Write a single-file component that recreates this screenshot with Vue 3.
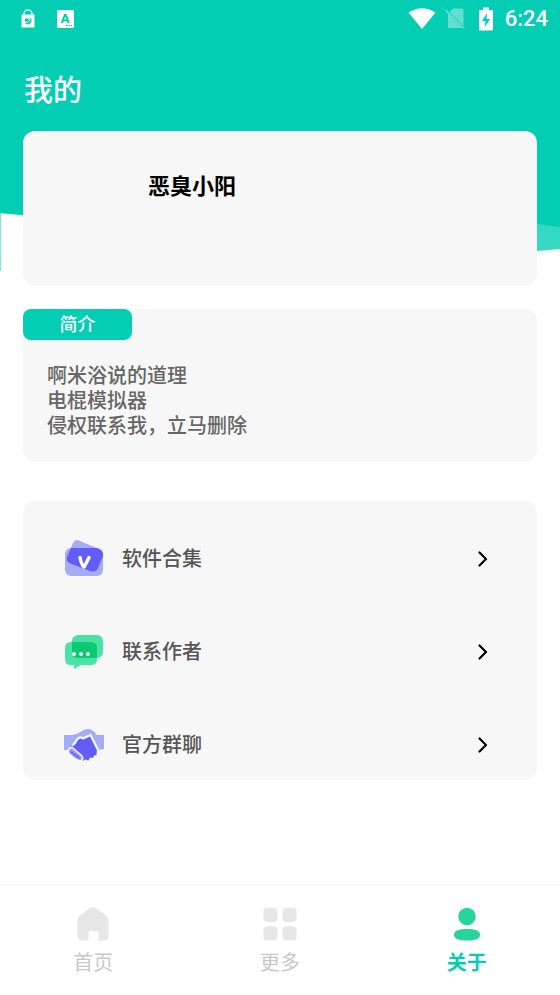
<script setup>
const notes = ['啊米浴说的道理', '电棍模拟器', '侵权联系我，立马删除'].join('\n')
const entries = [
  { id: 'apps', label: '软件合集' },
  { id: 'author', label: '联系作者' },
  { id: 'group', label: '官方群聊' },
]
const tabs = [
  { id: 'home', label: '首页' },
  { id: 'more', label: '更多' },
  { id: 'about', label: '关于', active: true },
]
</script>

<template>
  <div class="screen">
    <svg class="backdrop" viewBox="0 0 560 280" preserveAspectRatio="none" aria-hidden="true">
      <path fill="#35d8c1" d="M0 0H560V249Q548 250 537 251Q280 262 23 215L0 213Z" />
      <path fill="#03ceb4" d="M0 0H560V227L537 224L23 215L0 213Z" />
      <path fill="#7fe6d8" d="M0 213H1V271H0Z" />
    </svg>

    <header class="status">
      <div class="status-group left">
        <svg width="14" height="20" viewBox="0 0 14 20" aria-hidden="true">
          <path d="M3 6V5a4 4 0 0 1 8 0v1" fill="none" stroke="#fff" stroke-opacity=".8" stroke-width="1.6" />
          <path d="M0.5 5.500H13.500V18.500H0.500Z" fill="#fff" />
          <path d="M3.500 11a2 2 0 0 1 3-1.500l1 1q2-.5 2.500-2.500q1.500 4-1 6.500q-2.500 2-5 0l3-1q-3-.500-3.500-2.500Z" fill="#03ceb4" />
          <path d="M5.500 13q3 0 4.500-3.500" fill="none" stroke="#fff" stroke-width=".7" />
        </svg>
        <svg width="17" height="20" viewBox="0 0 17 20" aria-hidden="true">
          <rect y="1" width="17" height="18" rx="1.500" fill="#fff" />
          <path d="M7.200 5H9.400L12.800 14H10.600L10 12.200H6.600L6 14H3.800ZM8.300 7.500L7.200 10.600H9.400Z" fill="#03ceb4" fill-rule="evenodd" />
          <path d="M9 16.500h6" stroke="#03ceb4" stroke-width="1.200" stroke-dasharray="1.500 .8" />
        </svg>
      </div>
      <div class="status-group right">
        <svg width="28" height="22" viewBox="0 0 28 22" aria-hidden="true">
          <path d="M0.500 4.500Q14-4 27.500 4.500L14 21Z" fill="#fff" />
        </svg>
        <svg class="sim" width="20" height="22" viewBox="0 0 20 22" aria-hidden="true">
          <path d="M8 0.500H17.500a1 1 0 0 1 1 1V18L4.500 4ZM3 5.500L17.500 20H4a1 1 0 0 1-1-1Z" fill="#63dfcf" />
          <path d="M0.500 2L19 20.500" stroke="#63dfcf" stroke-width="1.700" />
        </svg>
        <svg width="14" height="24" viewBox="0 0 14 24" aria-hidden="true">
          <path d="M4 0.500H10V3H13a1 1 0 0 1 1 1V22.500a1 1 0 0 1-1 1H1a1 1 0 0 1-1-1V4a1 1 0 0 1 1-1H4Z" fill="#fff" />
          <path d="M8 6L3 14H6.500L5.500 20.500L11 12H7.500Z" fill="#03ceb4" />
        </svg>
        <time class="clock">6:24</time>
      </div>
    </header>

    <h1 class="title">我的</h1>

    <main class="content">
      <section class="card profile">
        <h2 class="name">恶臭小阳</h2>
      </section>

      <section class="card intro">
        <h2 class="tag">简介</h2>
        <p class="notes">{{ notes }}</p>
      </section>

      <ul class="card entries">
        <li v-for="entry in entries" :key="entry.id">
          <button class="entry" type="button">
            <svg v-if="entry.id === 'apps'" class="entry-icon" viewBox="0 0 40 40" aria-hidden="true">
              <defs>
                <clipPath id="folder-front"><rect x="1" y="9" width="38" height="28" rx="6" /></clipPath>
              </defs>
              <rect x="1" y="9" width="38" height="28" rx="6" fill="#a5adf8" />
              <path d="M15 1.500Q11 0 9 4L3 18Q2 22 5 24L26 32Q32 34 34 29L39 17Q40 12 35 10Z" fill="#a5adf8" />
              <path d="M15 1.500Q11 0 9 4L3 18Q2 22 5 24L26 32Q32 34 34 29L39 17Q40 12 35 10Z" fill="#625df6" clip-path="url(#folder-front)" />
              <path d="M16 18.500Q17.500 26 20 28Q22.500 24 25 18.500" fill="none" stroke="#fff" stroke-width="3.400" stroke-linecap="round" stroke-linejoin="round" />
            </svg>
            <svg v-else-if="entry.id === 'author'" class="entry-icon" viewBox="0 0 40 40" aria-hidden="true">
              <rect x="8" y="3" width="31" height="23" rx="6" fill="#4be3a5" />
              <path d="M7 10H27Q33 10 33 16V27Q33 33 27 33H17L10 37V33H7Q1 33 1 27V16Q1 10 7 10Z" fill="#4be3a5" />
              <path d="M8 10H27Q33 10 33 16V26H14Q8 26 8 20Z" fill="#0acb72" />
              <g fill="#fff"><circle cx="10" cy="22" r="2" /><circle cx="17" cy="22" r="2" /><circle cx="24" cy="22" r="2" /></g>
            </svg>
            <svg v-else class="entry-icon" viewBox="0 0 40 40" aria-hidden="true">
              <path d="M0 10H8Q12 10 16 7Q22 3 27 4.500Q31 6.500 33 10H40V24L33 25L22 18L9 25L0 25Z" fill="#a5adf8" />
              <path d="M7 22L10 17.500L18 12.500L27 10.500L33 23.500L32.500 30L30 30.500L29 33L26 32.500L24.500 35.500L21 34.500L19 36L17 30L9 24.500Z" fill="#625df6" />
              <path d="M9 20Q12 17 13 14.500Q16 11 19 13.500L26.500 10L33.500 24" fill="none" stroke="#f7f7f7" stroke-width="2.200" stroke-linejoin="round" stroke-linecap="round" />
              <path d="M4 27.500Q4 22 8.500 22.500Q12 26 17 30Q20.500 34 17 35.800Q12 36 4 27.500Z" fill="#9a9df9" stroke="#f7f7f7" stroke-width="1.600" />
              <path d="M7 27L16 33.500" stroke="#625df6" stroke-width="2.200" stroke-dasharray="2.500 .8" />
            </svg>
            <span class="entry-label">{{ entry.label }}</span>
            <svg class="chevron" viewBox="0 0 10 18" aria-hidden="true">
              <path d="M1.500 2.500L8 9L1.500 15.500" fill="none" stroke="#000" stroke-width="2.200" stroke-linecap="round" stroke-linejoin="round" />
            </svg>
          </button>
        </li>
      </ul>
    </main>

    <nav class="tabs">
      <a v-for="tab in tabs" :key="tab.id" class="tab" :class="{ active: tab.active }" :href="'#' + tab.id">
        <svg class="tab-icon" viewBox="0 0 36 36" aria-hidden="true">
          <path v-if="tab.id === 'home'" d="M15 2.200Q18 0.500 21 2.200L31 9.500Q33.500 11.500 33.500 14.500V29Q33.500 34.500 28 34.500H23.500V27Q23.500 25 21.500 25H15.500Q13.500 25 13.500 27V34.500H8Q2.500 34.500 2.500 29V14.500Q2.500 11.500 5 9.500Z" />
          <template v-else-if="tab.id === 'more'">
            <rect x="1.500" y="2" width="14" height="14" rx="4" />
            <rect x="20.500" y="2" width="14" height="14" rx="4" />
            <rect x="1.500" y="20.500" width="14" height="14" rx="4" />
            <rect x="20.500" y="20.500" width="14" height="14" rx="4" />
          </template>
          <template v-else>
            <circle cx="18" cy="10.500" r="8.700" />
            <path d="M18 23C26 23 31 24.500 31 28.800S26 34.600 18 34.600S5 33 5 28.800S10 23 18 23Z" />
          </template>
        </svg>
        <span>{{ tab.label }}</span>
      </a>
    </nav>
  </div>
</template>

<style>
body {
  background: #fff;
}
</style>

<style scoped>
.screen {
  position: relative;
  isolation: isolate;
  display: flex;
  flex-direction: column;
  min-height: 100vh;
  font-family: "Noto Sans CJK SC", sans-serif;
}

h1,
h2,
p,
ul {
  margin: 0;
  padding: 0;
}

.backdrop {
  position: absolute;
  z-index: -1;
  top: 0;
  left: 0;
  width: 100%;
  height: 280px;
}

.status {
  display: flex;
  justify-content: space-between;
  height: 38px;
  padding: 0 12px 0 21px;
}

.status-group {
  display: flex;
  align-items: center;
}

.left {
  gap: 22px;
}

.right {
  gap: 12px;
}

.sim {
  margin: 0 2px 0 -3px;
}

.clock {
  font: 500 22px/28px Roboto, sans-serif;
  color: #fff;
}

.title {
  padding: 30px 24px 23px;
  font-size: 29px;
  line-height: 40px;
  font-weight: 500;
  color: #fff;
}

.content {
  flex: 1;
  padding: 0 23px 24px;
}

.card {
  background: #f7f7f7;
  border-radius: 12px;
}

.profile {
  min-height: 155px;
  box-sizing: border-box;
  padding: 37px 24px 24px 125px;
}

.name {
  font-size: 22px;
  line-height: 32px;
  font-weight: 700;
  color: #000;
}

.intro {
  margin-top: 23px;
}

.tag {
  width: 109px;
  padding-bottom: 2px;
  border-radius: 8px;
  background: #03ceb4;
  color: #fff;
  font-size: 18px;
  line-height: 29px;
  font-weight: 500;
  text-align: center;
}

.notes {
  padding: 22px 24px 25px;
  font-size: 20px;
  line-height: 25px;
  font-weight: 500;
  color: #666;
  white-space: pre-line;
}

.entries {
  margin-top: 39px;
  list-style: none;
}

.entry {
  display: flex;
  align-items: center;
  width: 100%;
  height: 93px;
  padding: 22px 49px 0 41px;
  border: 0;
  background: none;
  font: inherit;
  text-align: left;
  cursor: pointer;
}

.entry-icon {
  width: 40px;
  height: 40px;
}

.entry-label {
  flex: 1;
  margin-left: 18px;
  padding-bottom: 2px;
  font-size: 20px;
  line-height: 28px;
  font-weight: 500;
  color: #555;
}

.chevron {
  width: 10px;
  height: 18px;
}

.tabs {
  display: grid;
  grid-template-columns: repeat(3, 1fr);
  border-top: 2px solid #f7f7f7;
}

.tab {
  display: flex;
  flex-direction: column;
  align-items: center;
  gap: 6px;
  padding: 20px 0 19px;
  color: #c8c8c8;
  font-size: 20px;
  line-height: 28px;
  text-decoration: none;
}

.tab-icon {
  width: 36px;
  height: 36px;
  fill: #e6e6e6;
}

.active {
  color: #03ceb4;
  font-weight: 700;
}

.active .tab-icon {
  fill: #27d49c;
}
</style>
